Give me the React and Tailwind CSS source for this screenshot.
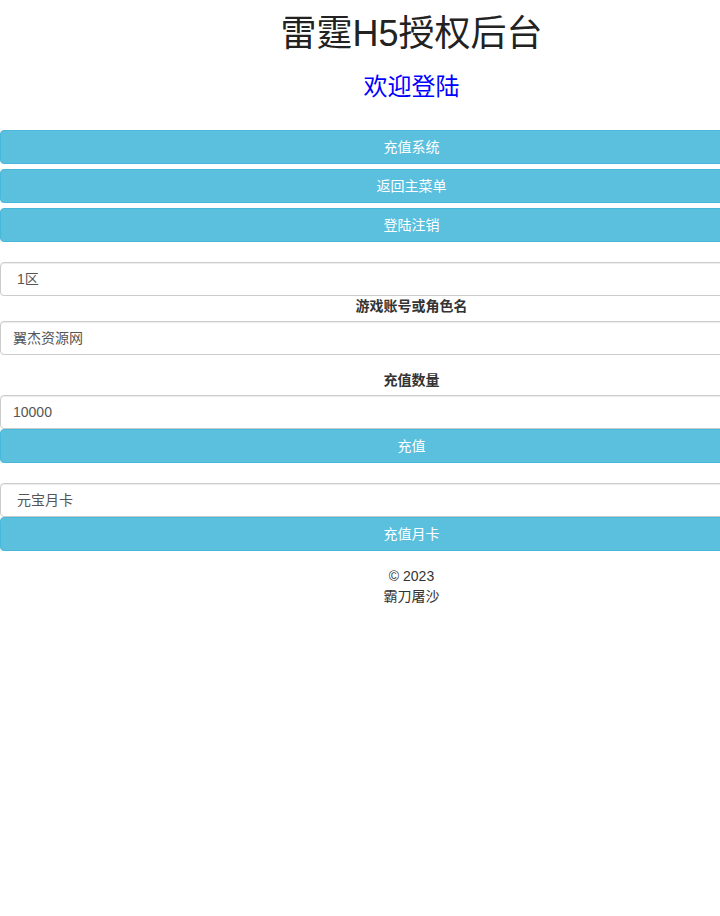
export default function App() {
  const font = { fontFamily: '"Liberation Sans", "Noto Sans CJK SC", sans-serif' };
  const btn = "block w-full h-[34px] rounded-[4px] border border-[#46b8da] bg-[#5bc0de] text-white text-[14px] leading-[20px] text-center";
  const input = "block w-full h-[34px] rounded-[4px] border border-[#ccc] bg-white text-[14px] leading-[20px] text-[#555] shadow-[inset_0_1px_1px_rgba(0,0,0,0.075)] flex items-center";
  return (
    <div className="w-full overflow-hidden bg-white">
      <div className="w-[823px] bg-white text-[#333] text-[14px] leading-[20px]" style={font}>
        <div className="pt-[14px] text-center text-[36px] leading-[40px] text-[#222]">雷霆H5授权后台</div>
        <div className="mt-[19px] text-center text-[24px] leading-[27px] text-[#0000ff]">欢迎登陆</div>
        <div className="mt-[30px] flex flex-col gap-[5px]">
          <button className={btn}>充值系统</button>
          <button className={btn}>返回主菜单</button>
          <button className={btn}>登陆注销</button>
        </div>
        <div className="mt-[20px]">
          <div className={input + " pl-[16px]"}>1区</div>
          <div className="text-center font-bold h-[20px] mb-[5px]">游戏账号或角色名</div>
          <div className={input + " pl-[12px]"}>翼杰资源网</div>
          <div className="mt-[15px] text-center font-bold h-[20px] mb-[5px]">充值数量</div>
          <div className={input + " pl-[12px]"}>10000</div>
          <button className={btn}>充值</button>
        </div>
        <div className="mt-[20px]">
          <div className={input + " pl-[16px]"}>元宝月卡</div>
          <button className={btn}>充值月卡</button>
        </div>
        <div className="mt-[15px] text-center">
          <div>© 2023</div>
          <div>霸刀屠沙</div>
        </div>
      </div>
    </div>
  );
}
